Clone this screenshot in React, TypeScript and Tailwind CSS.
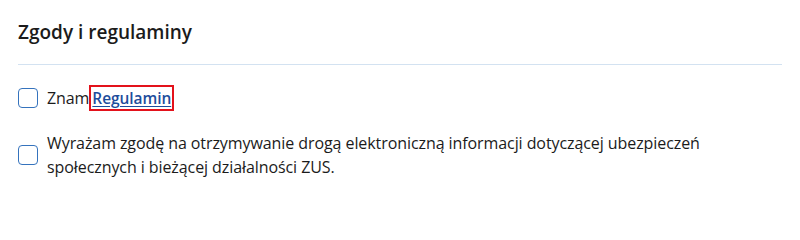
import { useState } from 'react'

function Checkbox({ checked, onChange }: { checked: boolean; onChange: () => void }) {
  return (
    <button
      type="button"
      role="checkbox"
      aria-checked={checked}
      onClick={onChange}
      className="w-5 h-5 shrink-0 rounded-[4px] border-[1.5px] border-[#3573bd] bg-white"
    />
  )
}

export default function App() {
  const [terms, setTerms] = useState(false)
  const [marketing, setMarketing] = useState(false)

  return (
    <div className="w-[800px] h-[215px] bg-white px-[18px] pt-[18px] text-[#1b1b1b] font-['Open_Sans',sans-serif]">
      <h2 className="text-[19px] leading-7 font-semibold">Zgody i regulaminy</h2>
      <div className="mt-[18px] border-t border-[#d3e2f1]" />

      <div className="mt-5 space-y-5">
        <label className="flex items-center gap-[9px]">
          <Checkbox checked={terms} onChange={() => setTerms(!terms)} />
          <span className="text-base leading-6 tracking-[-0.08px]">
            Znam
            <a
              href="#"
              className="inline-block border-2 border-[#e3121b] px-[1px] text-[15.5px] leading-[22px] font-semibold text-[#1d4d9c] underline underline-offset-2"
            >
              Regulamin
            </a>
          </span>
        </label>

        <label className="flex items-center gap-[9px]">
          <Checkbox checked={marketing} onChange={() => setMarketing(!marketing)} />
          <span className="text-base leading-6 tracking-[-0.08px]">
            Wyrażam zgodę na otrzymywanie drogą elektroniczną informacji dotyczącej ubezpieczeń
            społecznych i bieżącej działalności ZUS.
          </span>
        </label>
      </div>
    </div>
  )
}
